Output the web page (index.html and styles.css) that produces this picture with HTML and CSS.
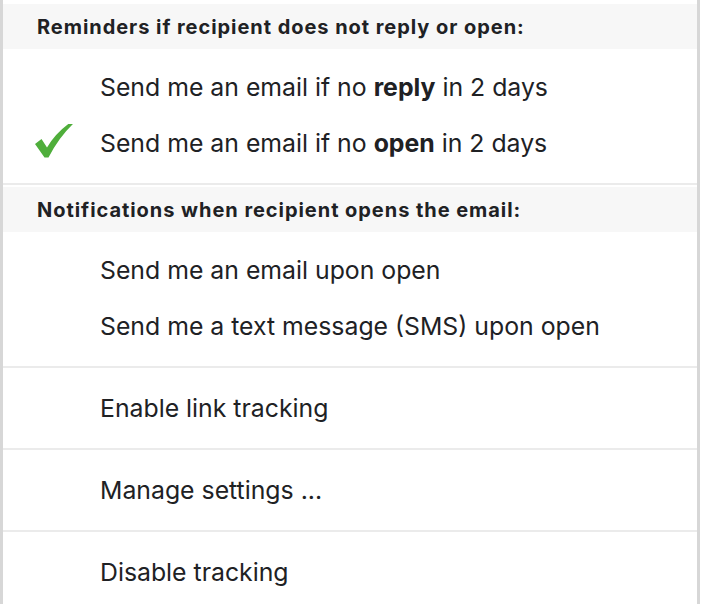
FILE: index.html
```html
<!DOCTYPE html>
<html>
<head>
<meta charset="utf-8">
<link rel="stylesheet" href="styles.css">
</head>
<body>
<div class="menu">
  <div class="section first">
    <div class="heading">Reminders if recipient does not reply or open:</div>
    <div class="items">
      <div class="item"><span class="check"></span><span class="label">Send me an email if no <b>reply</b> in 2 days</span></div>
      <div class="item"><span class="check"><svg width="41" height="38" viewBox="0 4 41 38"><path d="M1 24 L7.5 19 L13 27.5 Q22 12 38.5 1 L40 3 Q25 17 14.5 37.5 L10.5 37.5 Z" fill="#4fae3b"/></svg></span><span class="label">Send me an email if no <b>open</b> in 2 days</span></div>
    </div>
  </div>
  <div class="section">
    <div class="heading">Notifications when recipient opens the email:</div>
    <div class="items">
      <div class="item"><span class="check"></span><span class="label">Send me an email upon open</span></div>
      <div class="item"><span class="check"></span><span class="label">Send me a text message (SMS) upon open</span></div>
    </div>
  </div>
  <div class="section plain">
    <div class="item"><span class="check"></span><span class="label">Enable link tracking</span></div>
  </div>
  <div class="section plain">
    <div class="item"><span class="check"></span><span class="label">Manage settings ...</span></div>
  </div>
  <div class="section plain last">
    <div class="item"><span class="check"></span><span class="label">Disable tracking</span></div>
  </div>
</div>
</body>
</html>
```

FILE: styles.css
```css
html, body {
  margin: 0;
  padding: 0;
  background: #ffffff;
}
body {
  font-family: "Inter", "Roboto", sans-serif;
  color: #202124;
  width: 702px;
  height: 604px;
  overflow: hidden;
}
.menu {
  width: 694px;
  border-left: 3px solid #d7d7d7;
  border-right: 3px solid #d7d7d7;
  background: #ffffff;
  height: 604px;
}
.section {
  padding-top: 2px;
  border-bottom: 2px solid #ebebeb;
}
.section.first {
  padding-top: 4px;
}
.section.last {
  border-bottom: none;
}
.heading {
  height: 45px;
  background: #f7f7f7;
  display: flex;
  align-items: center;
  padding-left: 34px;
  font-size: 20px;
  font-weight: 700;
  letter-spacing: 0.95px;
  color: #202124;
}
.items {
  padding: 10px 0 12px;
}
.section.plain {
  padding: 12px 0;
}
.item {
  height: 56px;
  display: flex;
  align-items: center;
  font-size: 24.8px;
  font-weight: 400;
}
.check {
  width: 97px;
  display: flex;
  justify-content: flex-start;
  padding-left: 31px;
  box-sizing: border-box;
}
.check svg {
  display: block;
}
.label b {
  font-weight: 700;
}
```
